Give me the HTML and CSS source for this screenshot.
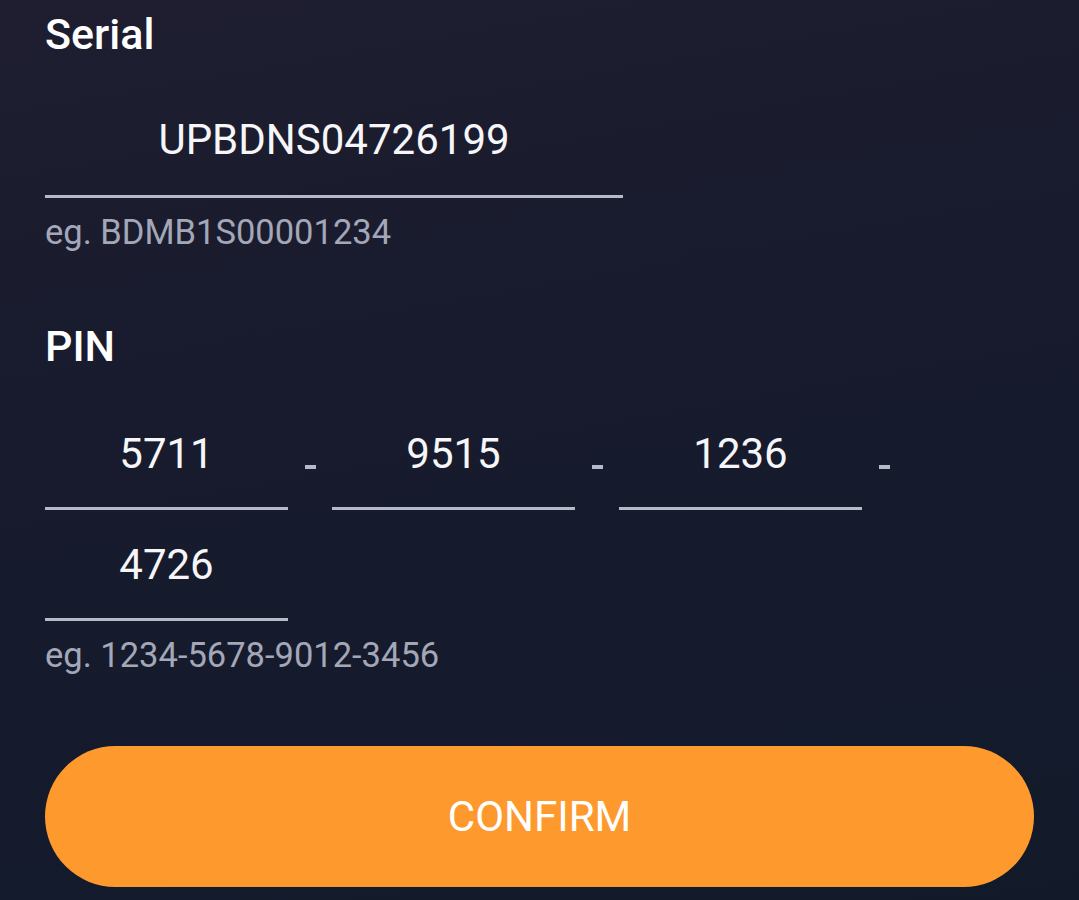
FILE: index.html
```html
<!DOCTYPE html>
<html lang="en">
<head>
<meta charset="utf-8">
<title>Serial &amp; PIN</title>
<link rel="stylesheet" href="styles.css">
</head>
<body>
<main class="form">
  <div class="label">Serial</div>
  <div class="field field-serial"><span class="value">UPBDNS04726199</span></div>
  <div class="hint">eg. BDMB1S00001234</div>

  <div class="label label-pin">PIN</div>
  <div class="pin-row">
    <div class="pin-group">
      <div class="field pin-box"><span class="value">5711</span></div>
      <div class="pin-sep"><span class="dash"></span></div>
    </div>
    <div class="pin-group">
      <div class="field pin-box"><span class="value">9515</span></div>
      <div class="pin-sep"><span class="dash"></span></div>
    </div>
    <div class="pin-group">
      <div class="field pin-box"><span class="value">1236</span></div>
      <div class="pin-sep"><span class="dash"></span></div>
    </div>
    <div class="pin-group">
      <div class="field pin-box"><span class="value">4726</span></div>
    </div>
  </div>
  <div class="hint">eg. 1234-5678-9012-3456</div>

  <button class="confirm" type="button">CONFIRM</button>
</main>
</body>
</html>
```

FILE: styles.css
```css
html, body {
  margin: 0;
  padding: 0;
}

body {
  min-height: 100vh;
  background: linear-gradient(170deg, #1e1e30 0%, #171b2d 45%, #121a2a 100%);
  font-family: Roboto, "Noto Sans", "Liberation Sans", sans-serif;
  color: #ffffff;
}

.form {
  padding: 8px 45px 0 45px;
  display: flex;
  flex-direction: column;
  align-items: flex-start;
}

.label {
  font-size: 43px;
  font-weight: 500;
  line-height: 52px;
  color: #ffffff;
}

.label-pin {
  margin-top: 68px;
}

.field {
  box-sizing: border-box;
  padding-bottom: 29px;
  border-bottom: 3px solid #b6b9c7;
  text-align: center;
}

.field .value {
  display: block;
  font-size: 42px;
  font-weight: 400;
  line-height: 52px;
  color: #f6f6f8;
}

.field-serial {
  width: 578px;
  margin-top: 54px;
}

.hint {
  margin-top: 14px;
  font-size: 34.5px;
  line-height: 40px;
  color: #a3a7b8;
}

.pin-row {
  margin-top: 56px;
  width: 100%;
  display: flex;
  flex-wrap: wrap;
  row-gap: 29px;
}

.pin-group {
  display: flex;
}

.pin-box {
  width: 243px;
  padding-bottom: 27px;
}

.pin-sep {
  width: 44px;
  display: flex;
  justify-content: center;
  padding-top: 37px;
  box-sizing: border-box;
}

.dash {
  display: block;
  width: 11px;
  height: 4px;
  background: #b6b9c7;
}

.confirm {
  margin-top: 71px;
  width: 989px;
  height: 141px;
  border: none;
  border-radius: 71px;
  background: #fe992e;
  color: #ffffff;
  font-family: Roboto, "Noto Sans", "Liberation Sans", sans-serif;
  font-size: 42px;
  font-weight: 400;
  display: flex;
  align-items: center;
  justify-content: center;
  padding: 0;
}
```
